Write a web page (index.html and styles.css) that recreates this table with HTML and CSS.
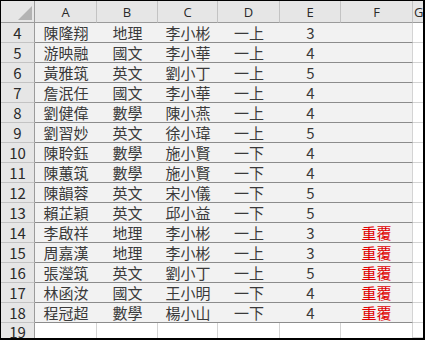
FILE: index.html
```html
<!DOCTYPE html>
<html lang="zh-Hant">
<head>
<meta charset="utf-8">
<title>Sheet</title>
<link rel="stylesheet" href="styles.css">
</head>
<body>
<div class="sheet">
  <div class="corner"><span class="tri"></span></div>
  <div class="ch">A</div><div class="ch">B</div><div class="ch">C</div><div class="ch">D</div><div class="ch">E</div><div class="ch">F</div><div class="ch g">G</div>

  <div class="rh">4</div><div class="c">陳隆翔</div><div class="c">地理</div><div class="c">李小彬</div><div class="c">一上</div><div class="c n">3</div><div class="c f"></div><div class="w"></div>
  <div class="rh">5</div><div class="c">游映融</div><div class="c">國文</div><div class="c">李小華</div><div class="c">一上</div><div class="c n">4</div><div class="c f"></div><div class="w"></div>
  <div class="rh">6</div><div class="c">黃雅筑</div><div class="c">英文</div><div class="c">劉小丁</div><div class="c">一上</div><div class="c n">5</div><div class="c f"></div><div class="w"></div>
  <div class="rh">7</div><div class="c">詹泯任</div><div class="c">國文</div><div class="c">李小華</div><div class="c">一上</div><div class="c n">4</div><div class="c f"></div><div class="w"></div>
  <div class="rh">8</div><div class="c">劉健偉</div><div class="c">數學</div><div class="c">陳小燕</div><div class="c">一上</div><div class="c n">4</div><div class="c f"></div><div class="w"></div>
  <div class="rh">9</div><div class="c">劉習妙</div><div class="c">英文</div><div class="c">徐小瑋</div><div class="c">一上</div><div class="c n">5</div><div class="c f"></div><div class="w"></div>
  <div class="rh">10</div><div class="c">陳聆鈺</div><div class="c">數學</div><div class="c">施小賢</div><div class="c">一下</div><div class="c n">4</div><div class="c f"></div><div class="w"></div>
  <div class="rh">11</div><div class="c">陳蕙筑</div><div class="c">數學</div><div class="c">施小賢</div><div class="c">一下</div><div class="c n">4</div><div class="c f"></div><div class="w"></div>
  <div class="rh">12</div><div class="c">陳韻蓉</div><div class="c">英文</div><div class="c">宋小儀</div><div class="c">一下</div><div class="c n">5</div><div class="c f"></div><div class="w"></div>
  <div class="rh">13</div><div class="c">賴芷穎</div><div class="c">英文</div><div class="c">邱小益</div><div class="c">一下</div><div class="c n">5</div><div class="c f"></div><div class="w"></div>
  <div class="rh">14</div><div class="c">李啟祥</div><div class="c">地理</div><div class="c">李小彬</div><div class="c">一上</div><div class="c n">3</div><div class="c f red">重覆</div><div class="w"></div>
  <div class="rh">15</div><div class="c">周嘉漢</div><div class="c">地理</div><div class="c">李小彬</div><div class="c">一上</div><div class="c n">3</div><div class="c f red">重覆</div><div class="w"></div>
  <div class="rh">16</div><div class="c">張瀅筑</div><div class="c">英文</div><div class="c">劉小丁</div><div class="c">一上</div><div class="c n">5</div><div class="c f red">重覆</div><div class="w"></div>
  <div class="rh">17</div><div class="c">林函汝</div><div class="c">國文</div><div class="c">王小明</div><div class="c">一下</div><div class="c n">4</div><div class="c f red">重覆</div><div class="w"></div>
  <div class="rh">18</div><div class="c">程冠超</div><div class="c">數學</div><div class="c">楊小山</div><div class="c">一下</div><div class="c n">4</div><div class="c f red">重覆</div><div class="w"></div>
  <div class="rh last">19</div><div class="e"></div><div class="e"></div><div class="e"></div><div class="e"></div><div class="e"></div><div class="e"></div><div class="w"></div>
</div>
</body>
</html>
```
FILE: styles.css
```css
html, body {
  margin: 0;
  padding: 0;
  background: #ffffff;
}
.sheet {
  box-sizing: border-box;
  width: 425px;
  height: 340px;
  border-left: 1px solid #000;
  border-top: 1px solid #000;
  border-right: 2px solid #000;
  border-bottom: 2px solid #000;
  overflow: hidden;
  display: grid;
  grid-template-columns: 34px 62px 61px 60px 62px 61px 72px 1fr;
  grid-template-rows: 22px repeat(15, 20px) 15px;
  font-family: "Noto Sans CJK TC", "Noto Sans", sans-serif;
  color: #3a3a3a;
}
.sheet > div {
  box-sizing: border-box;
  display: flex;
  align-items: center;
  justify-content: center;
  white-space: nowrap;
  overflow: hidden;
}
.corner {
  background: #e6e6e6;
  border-right: 1px solid #9b9b9b;
  border-bottom: 1px solid #9b9b9b;
  position: relative;
}
.tri {
  position: absolute;
  right: 2px;
  bottom: 2px;
  width: 0;
  height: 0;
  border-left: 14px solid transparent;
  border-bottom: 14px solid #b3b3b3;
}
.ch {
  background: #e6e6e6;
  border-right: 1px solid #c3c3c3;
  border-bottom: 1px solid #9b9b9b;
  font-family: "Open Sans", "Noto Sans", sans-serif;
  font-size: 13px;
  color: #2a2a2a;
  padding-top: 1px;
}
.ch.g {
  justify-content: flex-start;
  padding-left: 1px;
  border-right: none;
}
.rh {
  background: #e6e6e6;
  border-right: 1px solid #9b9b9b;
  border-bottom: 1px solid #c3c3c3;
  font-size: 15px;
  color: #2a2a2a;
}
.rh.last {
  align-items: flex-start;
  line-height: 15px;
  padding-top: 1px;
  border-bottom: none;
}
.c {
  background: #f2f2f2;
  border-bottom: 1px solid #8c8c8c;
  font-size: 15px;
}
.c.f {
  border-right: 1px solid #d4d4d4;
}
.red {
  color: #e00000;
}
.w {
  background: #fff;
  border-bottom: 1px solid #d4d4d4;
}
.e {
  background: #fff;
  border-right: 1px solid #d4d4d4;
}
```
